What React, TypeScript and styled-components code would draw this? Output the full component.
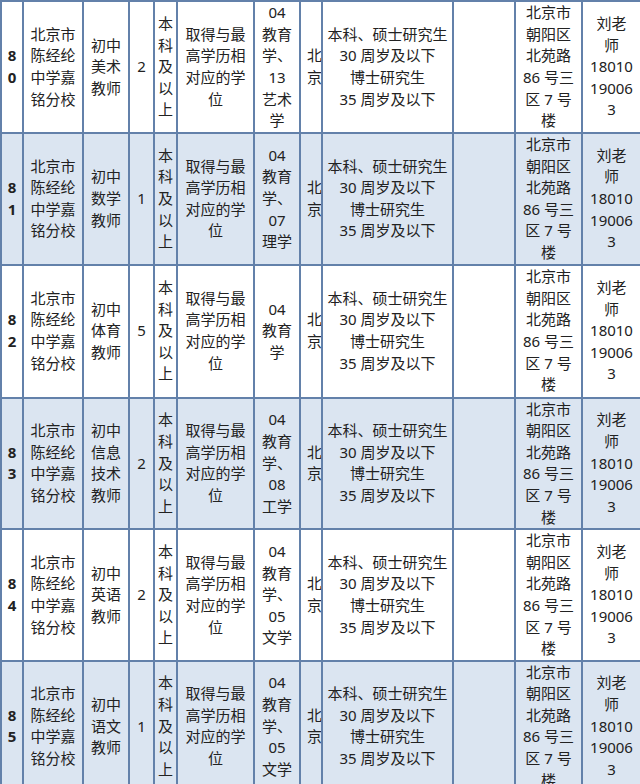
import { Fragment } from "react";
import styled, { createGlobalStyle } from "styled-components";

const GlobalStyle = createGlobalStyle`
  html, body {
    margin: 0;
    padding: 0;
    background: #fff;
  }
  body {
    font-family: "Noto Sans", "Noto Sans CJK SC", sans-serif;
    color: #222;
  }
`

const Sheet = styled.table`
  width: 640px;
  table-layout: fixed;
  border-collapse: collapse;
  font-size: 15px;
  line-height: 21.6px;
`

const Row = styled.tr<{ $shade: boolean; $h: number }>`
  height: ${(p) => p.$h}px;
  background-color: ${(p) => (p.$shade ? "#dbe5f1" : "#ffffff")};
`

const Cell = styled.td`
  border: 2px solid #6381aa;
  padding: 0;
  text-align: center;
  vertical-align: middle;
  white-space: nowrap;
  overflow: hidden;
`

const NumCell = styled(Cell)`
  font-weight: 700;
  font-size: 15px;
`

const Clip = styled.div`
  width: 20px;
  overflow: hidden;
  text-align: left;
  padding-left: 6px;
  box-sizing: border-box;
`

const Lines = ({ text }: { text: string }) => (
  <>
    {text.split("|").map((line, i) => (
      <Fragment key={i}>
        {i > 0 && <br />}
        {line}
      </Fragment>
    ))}
  </>
)

type Job = {
  no: string
  post: string
  count: string
  major: string
  h: number
}

const jobs: Job[] = [
  { no: "8|0", post: "初中|美术|教师", count: "2", major: "04|教育|学、|13|艺术|学", h: 132 },
  { no: "8|1", post: "初中|数学|教师", count: "1", major: "04|教育|学、|07|理学", h: 128 },
  { no: "8|2", post: "初中|体育|教师", count: "5", major: "04|教育|学", h: 133 },
  { no: "8|3", post: "初中|信息|技术|教师", count: "2", major: "04|教育|学、|08|工学", h: 131 },
  { no: "8|4", post: "初中|英语|教师", count: "2", major: "04|教育|学、|05|文学", h: 130 },
  { no: "8|5", post: "初中|语文|教师", count: "1", major: "04|教育|学、|05|文学", h: 130 },
]

const widths = [22, 60, 46, 25, 23, 77, 46, 22, 131, 62, 67, 59]

export default function App() {
  return (
    <>
      <GlobalStyle />
      <Sheet>
        <colgroup>
          {widths.map((w, i) => (
            <col key={i} style={{ width: w }} />
          ))}
        </colgroup>
        <tbody>
          {jobs.map((job, i) => (
            <Row key={job.no} $shade={i % 2 === 1} $h={job.h}>
              <NumCell><Lines text={job.no} /></NumCell>
              <Cell><Lines text="北京市|陈经纶|中学嘉|铭分校" /></Cell>
              <Cell><Lines text={job.post} /></Cell>
              <Cell>{job.count}</Cell>
              <Cell><Lines text="本|科|及|以|上" /></Cell>
              <Cell><Lines text="取得与最|高学历相|对应的学|位" /></Cell>
              <Cell><Lines text={job.major} /></Cell>
              <Cell>
                <Clip><Lines text="北|京" /></Clip>
              </Cell>
              <Cell><Lines text="本科、硕士研究生|30 周岁及以下|博士研究生|35 周岁及以下" /></Cell>
              <Cell />
              <Cell><Lines text="北京市|朝阳区|北苑路|86 号三|区 7 号|楼" /></Cell>
              <Cell><Lines text="刘老|师|18010|19006|3" /></Cell>
            </Row>
          ))}
        </tbody>
      </Sheet>
    </>
  )
}
